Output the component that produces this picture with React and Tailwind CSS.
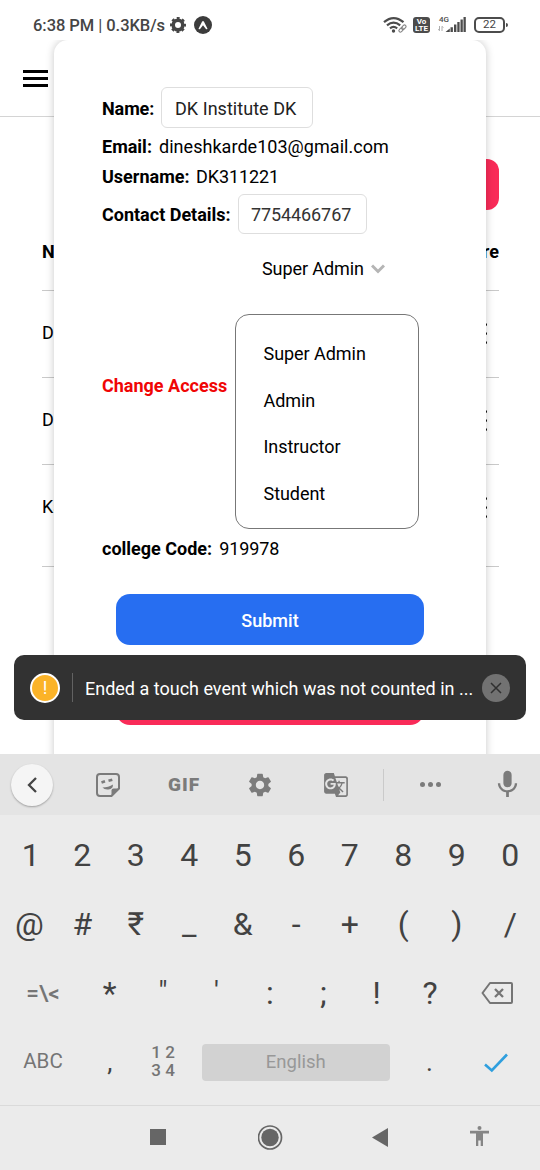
import React from "react";
import { MdSettings, MdMic, MdGTranslate } from "react-icons/md";

const rows = ["DK Institute", "Dinesh", "Karde"];
const roles = ["Super Admin", "Admin", "Instructor", "Student"];
const digits = ["1", "2", "3", "4", "5", "6", "7", "8", "9", "0"];
const symbols = ["@", "#", "₹", "_", "&", "-", "+", "(", ")", "/"];
const marks = ["*", '"', "'", ":", ";", "!", "?"];

function StatusBar() {
  return (
    <div className="flex h-10 shrink-0 items-center bg-white pt-[10px] pl-[33px] text-[#454545]">
      <span className="w-[133px] whitespace-nowrap text-[16.5px] font-medium tracking-[-0.05px]">
        6:38 PM <span className="font-normal">|</span> 0.3KB/s
      </span>
      <svg className="ml-1 size-4" viewBox="0 0 16 16" fill="none" stroke="currentColor">
        <circle cx="8" cy="8" r="4.8" strokeWidth="3.600" />
        <circle cx="8" cy="8" r="6.900" strokeWidth="2.200" strokeDasharray="2.900 2.520" strokeDashoffset="1.450" />
      </svg>
      <svg className="ml-2 size-[18px]" viewBox="0 0 18 18">
        <circle cx="9" cy="9" r="9" fill="#3c3c3c" />
        <path d="M4.500 12.800 8 5.800Q9 4.400 10 5.800L13.500 12.800Q12.500 14 11.500 12.600L9 9.200 6.500 12.600Q5.500 14 4.500 12.800Z" fill="#fff" />
      </svg>
      <svg className="ml-[171px] h-[18px] w-6" viewBox="0 0 24 18" fill="none" stroke="#4c4c4c">
        <path d="M1 6.200Q10.500-2 20.500 6.200M4 9.300Q10.500 3.800 17.200 9.300M7 12.300Q10.500 9.400 14.200 12.300" strokeWidth="2.200" />
        <circle cx="10.500" cy="15" r="1.700" fill="#4c4c4c" stroke="none" />
        <g stroke="#858585" strokeWidth="1.100" transform="rotate(-45 19.500 12.500)">
          <rect x="15" y="11" width="5" height="3" rx="1.500" />
          <rect x="18.800" y="11" width="5" height="3" rx="1.500" />
        </g>
      </svg>
      <div className="ml-[6px] flex h-4 w-[17px] flex-col items-center justify-center rounded-[3px] bg-[#4c4c4c] text-[8px] leading-[7px] font-bold text-white">
        <span>Vo</span>
        <span>LTE</span>
      </div>
      <svg className="ml-[7px] h-[18px] w-[30px]" viewBox="0 0 30 18" fill="#4c4c4c">
        <text x="2" y="6.200" fontSize="8" fontWeight="500" fontFamily="Roboto">4G</text>
        <path d="M2.500 10v4.500M1.300 13.200l1.200 1.600M5 15v-4.500M5 10.200l1.300 1.500" stroke="#999" strokeWidth="0.800" fill="none" />
        <path d="M8.500 16 12.800 12.500V16ZM13.500 11.200h2.400V16h-2.400ZM17 8.500h2.400V16H17ZM20.300 6h2.300v10h-2.300ZM23.500 3.500h2.300V16h-2.300ZM26.500 1h2.300v15h-2.300Z" />
      </svg>
      <div className="ml-[7px] flex h-4 w-[31px] items-center justify-center rounded-[5px] border-2 border-[#4c4c4c] text-[11.5px] leading-none">
        22
      </div>
      <div className="ml-px h-1 w-[2px] rounded-r bg-[#4c4c4c]" />
    </div>
  );
}

function BackgroundPage() {
  return (
    <div className="flex h-full flex-col">
      <div className="flex h-[77px] shrink-0 items-center border-b border-[#d4d4d4] pl-[23px]">
        <div className="flex w-[25px] flex-col gap-1">
          <div className="h-[3px] bg-black" />
          <div className="h-[3px] bg-black" />
          <div className="h-[3px] bg-black" />
        </div>
      </div>
      <div className="mt-[42px] mr-[41px] h-[51px] w-28 shrink-0 self-end rounded-xl bg-[#f92b58]" />
      <div className="mr-[41px] ml-[42px] flex flex-col">
        <div className="flex h-[81px] items-center justify-between border-b border-[#c9c9c9] pt-[2px] font-bold">
          <span>Name</span>
          <span>More</span>
        </div>
        {rows.map((name, i) => (
          <div
            key={name}
            className={
              i === 2
                ? "flex h-[102px] items-start justify-between border-b border-[#c9c9c9] pt-[28px]"
                : "flex h-[87px] items-start justify-between border-b border-[#c9c9c9] pt-[28px]"
            }
          >
            <span>{name}</span>
            <div className="mr-[12px] flex flex-col gap-[6px] pt-[4px]">
              <div className="size-[3px] rounded-full bg-black" />
              <div className="size-[3px] rounded-full bg-black" />
              <div className="size-[3px] rounded-full bg-black" />
            </div>
          </div>
        ))}
      </div>
    </div>
  );
}

function AccessForm() {
  return (
    <div className="absolute top-0 left-[54px] flex h-[730px] w-[432px] flex-col rounded-t-[14px] bg-white pt-[47px] pl-12 shadow-[0_0_8px_rgba(0,0,0,0.22)]">
      <div className="flex h-[41px] items-center">
        <b className="w-[59px] pt-px tracking-[-0.1px]">Name:</b>
        <div className="flex h-[41px] w-[152px] items-center rounded-md border border-[#dedede] pt-px pl-[13px] tracking-[0.04px] text-[#222]">DK Institute DK</div>
      </div>
      <div className="mt-[3px] flex h-[30px] items-center gap-[7px]">
        <b>Email:</b>
        <span className="tracking-[0.04px]">dineshkarde103@gmail.com</span>
      </div>
      <div className="flex h-[30px] items-center">
        <b className="w-[94px]">Username:</b>
        <span className="tracking-[-0.1px]">DK311221</span>
      </div>
      <div className="mt-[3px] flex h-[40px] items-center">
        <b className="w-[136px]">Contact Details:</b>
        <div className="flex h-[40px] w-[129px] items-center rounded-md border border-[#dedede] pt-px pl-3 tracking-[-0.1px] text-[#333]">7754466767</div>
      </div>
      <div className="flex h-[295px]">
        <b className="w-[133px] shrink-0 pt-[138px] text-[#f00505]">Change Access</b>
        <div className="flex flex-col">
          <div className="mt-[21px] flex h-7 items-center gap-[7px] pl-[27px]">
            <span className="tracking-[-0.08px]">Super Admin</span>
            <svg className="h-[10px] w-[14px]" viewBox="0 0 14 10" fill="none" stroke="#b5b5b5" strokeWidth="3">
              <path d="m1 1.500 6 6 6-6" />
            </svg>
          </div>
          <div className="mt-[31px] flex h-[216px] w-[184px] flex-col rounded-[14px] border border-[#777] pt-[15.500px] pl-[27.500px] tracking-[-0.05px]">
            {roles.map((role) => (
              <div key={role} className="flex h-[46.5px] items-center">{role}</div>
            ))}
          </div>
        </div>
      </div>
      <div className="mt-[4px] flex h-[30px] items-center gap-[7px]">
        <b>college Code:</b>
        <span className="tracking-[-0.1px]">919978</span>
      </div>
      <div className="mt-[31px] ml-[14px] flex h-[51px] w-[308px] items-center justify-center rounded-[14px] bg-[#276ef1] pt-px font-medium text-white">Submit</div>
      <div className="mt-7 ml-[14px] h-[52px] w-[308px] rounded-[14px] bg-[#f92b58]" />
    </div>
  );
}

function Toast() {
  return (
    <div className="absolute top-[615px] left-[14px] flex h-[65px] w-[512px] items-center rounded-[10px] bg-[#323232] pl-[16px] text-white">
      <div className="flex size-[30px] items-center justify-center rounded-full border-2 border-white bg-[#fbb328] text-[18px] leading-none">!</div>
      <div className="ml-[12px] h-[29px] w-px bg-[#626262]" />
      <span className="ml-[12px] w-[389px] whitespace-nowrap pt-px text-[18px]">Ended a touch event which was not counted in ...</span>
      <svg className="ml-[8px] size-7" viewBox="0 0 28 28">
        <circle cx="14" cy="14" r="14" fill="#727272" />
        <path d="m9 9 10 10M19 9 9 19" stroke="#303030" strokeWidth="1.500" />
      </svg>
    </div>
  );
}

function Toolbar() {
  return (
    <div className="flex h-[61px] shrink-0 items-center bg-[#e4e4e4] text-[#7b7b7b]">
      <div className="ml-[11px] flex size-[42px] items-center justify-center rounded-full bg-[#f5f5f5] shadow-[0_1px_2px_rgba(0,0,0,0.3)]">
        <svg className="h-4 w-[10px]" viewBox="0 0 10 16" fill="none" stroke="#444" strokeWidth="2.300">
          <path d="M9 1 2 8l7 7" />
        </svg>
      </div>
      <svg className="ml-[43px] size-6" viewBox="0 0 24 24" fill="none" stroke="currentColor" strokeWidth="2">
        <path d="M15.500 23H4Q1 23 1 20V4Q1 1 4 1H20Q23 1 23 4V15.500Z" />
        <path d="M15.500 23v-5.500q0-2 2-2H23Z" fill="currentColor" stroke="none" />
        <path d="m5.500 9.500 3.500-1.300M12.500 7.800 16.300 6.700" strokeWidth="2.600" />
        <path d="M6.500 14.500Q12.500 14.500 17 11.500 17 16 12.500 16.500 8.500 17 6.500 14.500Z" fill="currentColor" stroke="none" />
      </svg>
      <span className="ml-12 w-8 text-[19px] leading-none font-black tracking-[1px]">GIF</span>
      <MdSettings className="ml-[46px] size-7" />
      <MdGTranslate className="ml-[49px] size-[26px]" />
      <div className="ml-[34px] h-8 w-px bg-[#cacaca]" />
      <div className="ml-9 flex w-[21px] justify-between">
        <div className="size-[5px] rounded-full bg-[#7b7b7b]" />
        <div className="size-[5px] rounded-full bg-[#7b7b7b]" />
        <div className="size-[5px] rounded-full bg-[#7b7b7b]" />
      </div>
      <MdMic className="ml-[50px] h-[33px] w-[33px]" />
    </div>
  );
}

function Keyboard() {
  return (
    <div className="flex h-[351px] shrink-0 flex-col bg-[#ebebeb] text-[32px] leading-none text-[#424242]">
      <Toolbar />
      <div className="grid h-20 grid-cols-10 items-center pr-[3px] pl-[2px] text-center">
        {digits.map((k) => <span key={k} className={k === "1" ? "pl-[4px]" : ""}>{k}</span>)}
      </div>
      <div className="grid h-[58px] grid-cols-10 items-center pr-[3px] pl-[2px] text-center">
        {symbols.map((k) => <span key={k} className={k === "@" ? "pl-px" : ""}>{k}</span>)}
      </div>
      <div className="flex h-20 items-center px-[3px] text-center">
        <span className="w-20 text-[22.5px] font-medium text-[#757575]">=\&lt;</span>
        {marks.map((k) => (
          <span key={k} className={k === '"' || k === "'" ? "w-[53.4px] pb-[2px] text-[28px]" : "w-[53.4px]"}>{k}</span>
        ))}
        <div className="flex w-20 justify-center">
          <svg className="h-[22px] w-[32px]" viewBox="0 0 32 22" fill="none" stroke="#757575" strokeWidth="2">
            <path d="M9 1H30q1 0 1 1v18q0 1-1 1H9L1.500 11Z" strokeLinejoin="round" />
            <path d="m14 7 8 8m0-8-8 8" strokeWidth="2.300" />
          </svg>
        </div>
      </div>
      <div className="flex h-[58px] items-center px-[3px] text-center">
        <span className="w-20 pb-[2px] text-[20.5px] text-[#757575]">ABC</span>
        <span className="w-[53.4px] text-[26px]">,</span>
        <div className="flex w-[53.4px] flex-col items-center pb-[3px] text-[17px] leading-[18px] font-medium text-[#757575]">
          <span>1 2</span>
          <span>3 4</span>
        </div>
        <div className="mr-[13px] ml-[12px] flex h-[37px] w-[188px] items-center justify-center rounded bg-[#d2d2d2] pt-px text-[18.5px] text-[#989898]">English</div>
        <span className="w-[53.4px] text-[26px]">.</span>
        <div className="flex w-20 justify-center pt-px">
          <svg className="h-5 w-6" viewBox="0 0 24 20" fill="none" stroke="#2f9fde" strokeWidth="2.600">
            <path d="m1 11.500 6.800 6L23 1.500" />
          </svg>
        </div>
      </div>
    </div>
  );
}

function NavigationBar() {
  return (
    <div className="flex h-[65px] shrink-0 items-center border-t border-[#dadada] bg-[#ebebeb] pb-[2px] text-[#666]">
      <div className="ml-[150px] size-4 bg-[#666]" />
      <svg className="ml-[92px] size-[25px]" viewBox="0 0 25 25">
        <circle cx="12" cy="12.500" r="11.500" fill="none" stroke="currentColor" strokeWidth="1.700" />
        <circle cx="12" cy="12.500" r="8.700" fill="currentColor" />
      </svg>
      <svg className="ml-[89px] h-[19px] w-4" viewBox="0 0 16 19">
        <path d="M0 9.500 16 0v19Z" fill="currentColor" />
      </svg>
      <svg className="-mt-[3px] ml-[82px] h-5 w-[19px]" viewBox="0 0 19 20" fill="#858585">
        <circle cx="9.500" cy="2" r="2" />
        <path d="M0 4.800H19V7.500H13V20H10.700V14.500H8.300V20H6V7.500H0Z" />
      </svg>
    </div>
  );
}

export default function App() {
  return (
    <div className="flex h-[1170px] w-[540px] flex-col overflow-hidden bg-white font-['Roboto','Noto_Sans',sans-serif] text-[18px] leading-[27px] text-black">
      <StatusBar />
      <div className="relative h-[714px] shrink-0 overflow-hidden">
        <BackgroundPage />
        <AccessForm />
        <Toast />
      </div>
      <Keyboard />
      <NavigationBar />
    </div>
  );
}
